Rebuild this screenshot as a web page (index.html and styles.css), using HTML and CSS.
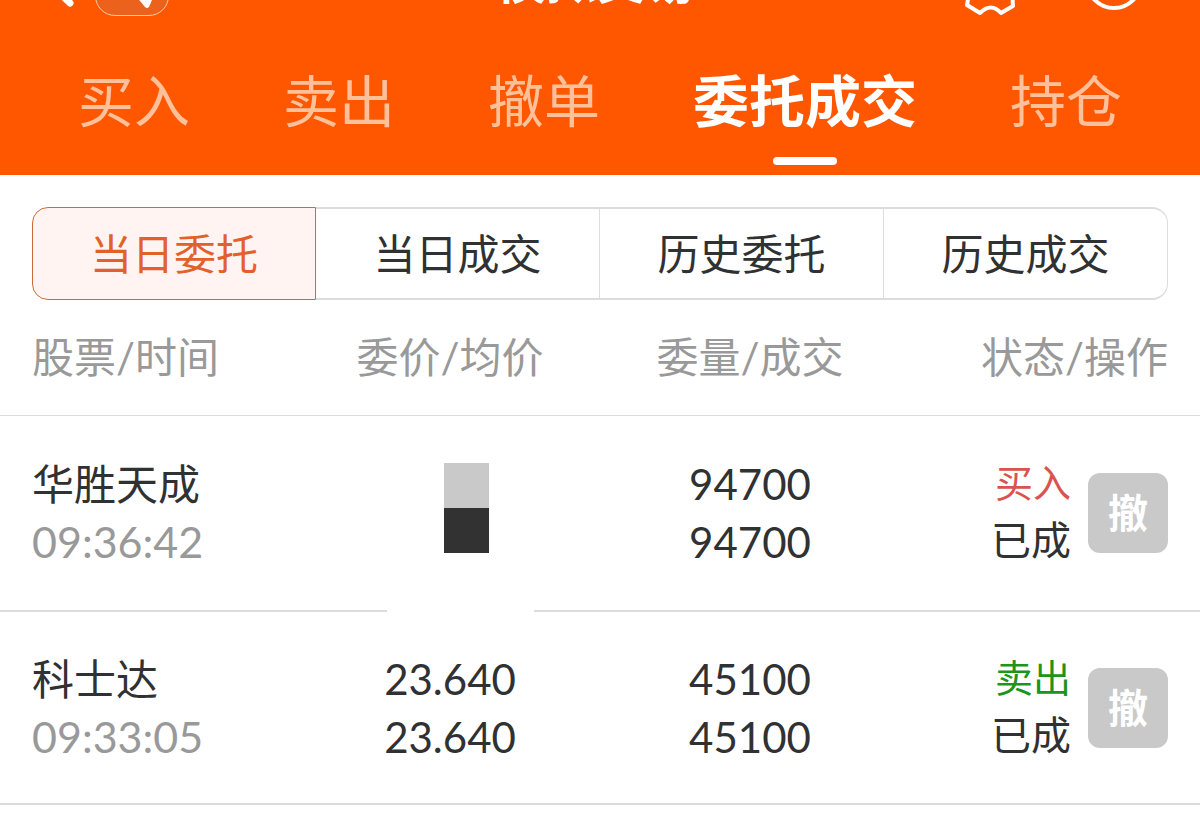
FILE: index.html
```html
<!DOCTYPE html>
<html lang="zh-CN">
<head>
<meta charset="utf-8">
<meta name="viewport" content="width=device-width, initial-scale=1">
<title>模拟交易</title>
<link rel="stylesheet" href="styles.css">
</head>
<body>
<header class="header">
  <div class="topbar">
    <div class="topbar-side">
      <button class="icon-button" aria-label="返回"><svg width="32" height="48" viewBox="0 0 32 48"><path d="M24 2 3 22l21 20" fill="none" stroke="#fff" stroke-width="7" stroke-linecap="round" stroke-linejoin="round"/></svg></button>
      <button class="pill" aria-label="位置"><svg width="32" height="36" viewBox="0 0 32 36"><path d="M0 2 30 2 18 30Q16 32 14 30L4 18Z" fill="#fff"/></svg></button>
    </div>
    <h1 class="title">模拟交易</h1>
    <div class="topbar-side topbar-end">
      <button class="icon-button" aria-label="设置"><svg width="54" height="54" viewBox="0 0 54 54"><path d="M17 3Q26 11 35 3L50 11Q45 21 49 27Q47 35 48 44L36 51Q26 40 15 51L2 43Q4 35 2 27Q6 21 2 11Z" fill="none" stroke="#fff" stroke-width="4" stroke-linejoin="round"/></svg></button>
      <button class="icon-button icon-round" aria-label="帮助"><svg width="60" height="60" viewBox="0 0 60 60"><circle cx="28" cy="29" r="27" fill="none" stroke="#fff" stroke-width="4"/></svg></button>
    </div>
  </div>
  <nav class="tabs">
    <a class="tab" href="#buy">买入</a>
    <a class="tab" href="#sell">卖出</a>
    <a class="tab" href="#cancel">撤单</a>
    <a class="tab tab-active" href="#orders" aria-current="page">委托成交</a>
    <a class="tab" href="#holdings">持仓</a>
  </nav>
</header>
<main>
  <div class="segments">
    <button class="segment segment-active">当日委托</button>
    <button class="segment">当日成交</button>
    <button class="segment">历史委托</button>
    <button class="segment">历史成交</button>
  </div>
  <table class="orders">
    <thead>
      <tr><th scope="col">股票/时间</th><th scope="col">委价/均价</th><th scope="col">委量/成交</th><th scope="col">状态/操作</th></tr>
    </thead>
    <tbody>
      <tr>
        <td><div>华胜天成</div><div class="time">09:36:42</div></td>
        <td class="masked"><span class="mask"></span></td>
        <td><div>94700</div><div>94700</div></td>
        <td><div class="action"><div class="status"><div class="side buy">买入</div><div class="state">已成</div></div><button class="cancel">撤</button></div></td>
      </tr>
      <tr>
        <td><div>科士达</div><div class="time">09:33:05</div></td>
        <td><div>23.640</div><div>23.640</div></td>
        <td><div>45100</div><div>45100</div></td>
        <td><div class="action"><div class="status"><div class="side sell">卖出</div><div class="state">已成</div></div><button class="cancel">撤</button></div></td>
      </tr>
    </tbody>
  </table>
</main>
</body>
</html>
```
FILE: styles.css
```css
* { box-sizing: border-box; }
body {
  margin: 0;
  background: #fff;
  color: #303132;
  font-family: Lato, "Noto Sans CJK SC", sans-serif;
  font-size: 42px;
}
button {
  margin: 0;
  padding: 0;
  border: 0;
  background: none;
  color: inherit;
  font: inherit;
}
svg { display: block; }

.header { background: #ff5700; color: #fff; }
.topbar {
  display: flex;
  justify-content: space-between;
  align-items: flex-end;
  height: 16px;
  padding: 0 54px 0 46px;
  overflow: hidden;
}
.topbar-side {
  display: flex;
  flex: 1;
  align-items: flex-end;
  gap: 17px;
}
.topbar-end { justify-content: flex-end; gap: 67px; }
.icon-button { flex: none; }
.topbar-side:first-child .icon-button { padding-bottom: 7px; }
.icon-round { padding-bottom: 4px; }
.pill {
  display: flex;
  justify-content: center;
  align-items: flex-end;
  width: 74px;
  height: 56px;
  padding: 0 0 2px 30px;
  border: 1px solid #ffc9a0;
  border-radius: 20px;
  background: #ec611c;
}
.title {
  flex: none;
  margin: 0 0 8px;
  font-size: 50px;
  line-height: 56px;
  font-weight: 700;
}
.tabs {
  display: flex;
  justify-content: space-between;
  padding: 45px 78px 10px;
}
.tab {
  display: flex;
  flex-direction: column;
  align-items: center;
  height: 104px;
  color: #ffc09a;
  font-size: 56px;
  line-height: 80px;
  text-decoration: none;
  white-space: nowrap;
}
.tab-active { color: #fff; font-weight: 700; }
.tab-active::after {
  content: "";
  width: 64px;
  height: 8px;
  margin-top: 16px;
  border-radius: 4px;
  background: #fff;
}

.segments {
  display: grid;
  grid-template-columns: repeat(4, 1fr);
  margin: 32px 32px 0;
}
.segment {
  height: 93px;
  padding-bottom: 4px;
  border: solid #dcdcdc;
  border-width: 2px 1px 2px 0;
}
.segment:first-child { border-radius: 16px 0 0 16px; }
.segment:last-child { border-radius: 0 16px 16px 0; }
.segment.segment-active {
  border: 1px solid #cc6a3a;
  background: #fff4f1;
  color: #e2602a;
}

.orders {
  width: 100%;
  table-layout: fixed;
  border-collapse: separate;
  border-spacing: 0;
  line-height: 58px;
  text-align: center;
}
.orders th {
  height: 116px;
  padding: 0 0 2px;
  border-bottom: 1px solid #dcdcdc;
  color: #999;
  font-weight: 400;
}
.orders td {
  height: 193px;
  padding: 0;
  border-bottom: 2px solid #dcdcdc;
}
.orders tbody tr:first-child td { height: 196px; }
.orders th:first-child, .orders td:first-child { padding-left: 32px; text-align: left; }
.orders th:last-child, .orders td:last-child { padding-right: 32px; text-align: right; }
.time { color: #999; font-size: 43px; }

.masked { position: relative; }
.mask {
  display: inline-block;
  width: 45px;
  height: 90px;
  margin: 0 0 10px 33px;
  background: linear-gradient(#c9c9c9 50%, #323232 50%);
  vertical-align: middle;
}
.masked::after {
  content: "";
  position: absolute;
  left: 29%;
  bottom: -2px;
  width: 49%;
  height: 2px;
  background: #fff;
}

.action {
  display: flex;
  justify-content: flex-end;
  align-items: center;
  gap: 17px;
}
.status { padding-bottom: 4px; }
.state { font-size: 40px; }
.side { font-size: 38px; }
.buy { color: #d9534f; }
.sell { color: #1c951c; }
.cancel {
  width: 80px;
  height: 80px;
  border-radius: 12px;
  background: #c9c9c9;
  color: #fff;
  font-size: 40px;
  line-height: 80px;
  font-weight: 700;
}
```
